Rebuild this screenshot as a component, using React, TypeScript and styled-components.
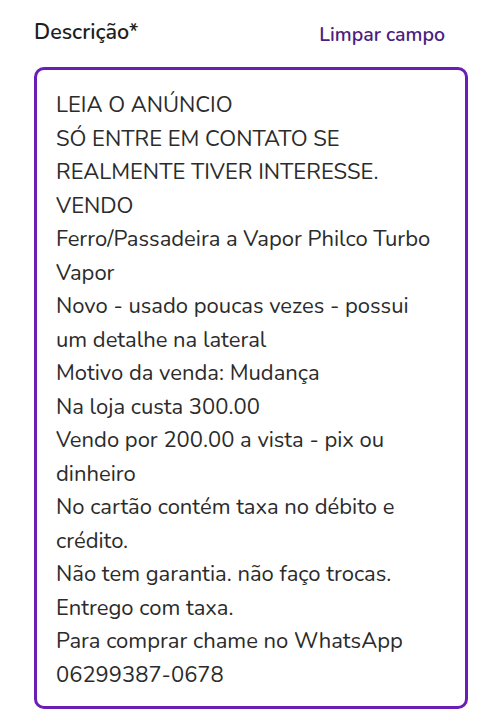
import React from 'react';
import styled, { createGlobalStyle } from 'styled-components';

const lines = [
  'LEIA O ANÚNCIO',
  'SÓ ENTRE EM CONTATO SE',
  'REALMENTE TIVER INTERESSE.',
  'VENDO',
  'Ferro/Passadeira a Vapor Philco Turbo',
  'Vapor',
  'Novo - usado poucas vezes - possui',
  'um detalhe na lateral',
  'Motivo da venda: Mudança',
  'Na loja custa 300.00',
  'Vendo por 200.00 a vista - pix ou',
  'dinheiro',
  'No cartão contém taxa no débito e',
  'crédito.',
  'Não tem garantia. não faço trocas.',
  'Entrego com taxa.',
  'Para comprar chame no WhatsApp',
  '06299387-0678',
];

const App: React.FC = () => {
  return (
    <Page>
      <GlobalStyle />
      <Header>
        <Label>Descrição*</Label>
        <ClearButton>Limpar campo</ClearButton>
      </Header>
      <Field>
        {lines.map((line, i) => (
          <Line key={i}>{line}</Line>
        ))}
      </Field>
    </Page>
  );
};

const GlobalStyle = createGlobalStyle`
  html, body {
    margin: 0;
    padding: 0;
    background: #ffffff;
  }
  body {
    font-family: "Nunito", "Lato", "Noto Sans", sans-serif;
  }
`;

const Page = styled.div`
  display: flex;
  flex-direction: column;
  padding: 20px 34px 0 34px;
  width: 501px;
  box-sizing: border-box;
`;

const Header = styled.div`
  display: flex;
  justify-content: space-between;
  align-items: center;
  height: 24px;
  margin-bottom: 23px;
`;

const Label = styled.span`
  font-size: 21.5px;
  font-weight: 600;
  color: #1f1f1f;
`;

const ClearButton = styled.span`
  font-size: 19.5px;
  font-weight: 600;
  color: #4a1d7e;
  margin-right: 22px;
  margin-top: 4px;
  cursor: pointer;
`;

const Field = styled.div`
  display: flex;
  flex-direction: column;
  border: 3px solid #6a1eb5;
  border-radius: 10px;
  padding: 19px 12px 14px 19px;
  width: 434px;
  box-sizing: border-box;
`;

const Line = styled.div`
  font-size: 22px;
  line-height: 33.5px;
  color: #2b2b2b;
  white-space: nowrap;
`;

export default App;
